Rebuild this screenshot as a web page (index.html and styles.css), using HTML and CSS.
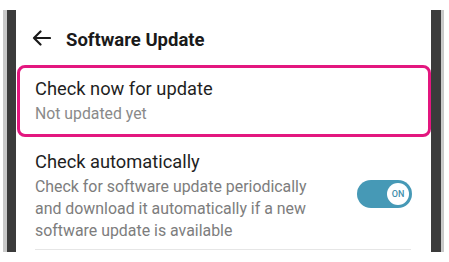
FILE: index.html
```html
<!DOCTYPE html>
<html>
<head>
<meta charset="utf-8">
<link rel="stylesheet" href="styles.css">
</head>
<body>
<div class="device">
  <div class="bezel-left"></div>
  <div class="screen">
    <div class="header">
      <svg class="back" width="19" height="16" viewBox="0 0 19 16"><path d="M18 8H2M8.5 1.5L2 8l6.5 6.5" fill="none" stroke="#1a1a1a" stroke-width="2.2" stroke-linecap="round" stroke-linejoin="round"/></svg>
      <span class="title">Software Update</span>
    </div>
    <div class="item highlighted">
      <div class="item-title">Check now for update</div>
      <div class="item-sub">Not updated yet</div>
    </div>
    <div class="item auto">
      <div class="item-text">
        <div class="item-title">Check automatically</div>
        <div class="item-desc">Check for software update periodically<br>and download it automatically if a new<br>software update is available</div>
      </div>
      <div class="toggle"><span class="knob">ON</span></div>
    </div>
    <div class="divider"></div>
  </div>
  <div class="bezel-right"></div>
</div>
</body>
</html>
```
FILE: styles.css
```css
html, body {
  margin: 0;
  padding: 0;
  background: #ffffff;
  font-family: Roboto, "Noto Sans", sans-serif;
}
.device {
  display: flex;
  margin-top: 10px;
  margin-left: 3px;
  width: 441px;
  height: 242px;
}
.bezel-left {
  width: 9px;
  background: #3b3b3b;
  border-left: 4px solid #c9c9c9;
}
.bezel-right {
  width: 10px;
  background: #3b3b3b;
  border-right: 3px solid #c9c9c9;
}
.screen {
  flex: 1;
  display: flex;
  flex-direction: column;
  background: #fff;
}
.header {
  display: flex;
  align-items: center;
  height: 55px;
  padding-left: 16px;
}
.back {
  margin-right: 15px;
}
.title {
  font-size: 18.5px;
  font-weight: 700;
  color: #1a1a1a;
  padding-top: 5px;
}
.item {
  padding-left: 16px;
}
.highlighted {
  margin-left: 1px;
  height: 66px;
  border: 3px solid #e3177f;
  border-radius: 8px;
  padding-left: 15px;
  display: flex;
  flex-direction: column;
  justify-content: center;
}
.item-title {
  font-size: 18.3px;
  color: #1f1f1f;
  line-height: 22px;
}
.item-sub {
  font-size: 15.8px;
  color: #8a8a8a;
  line-height: 20px;
  margin-top: 4px;
}
.auto {
  display: flex;
  align-items: flex-start;
  padding-left: 19px;
  padding-top: 14px;
  padding-right: 19px;
}
.item-text {
  flex: 1;
}
.item-desc {
  font-size: 15.9px;
  line-height: 22px;
  color: #7d7d7d;
  margin-top: 3px;
}
.toggle {
  width: 55px;
  height: 28px;
  border-radius: 14px;
  background: #4699b6;
  display: flex;
  align-items: center;
  justify-content: flex-end;
  padding-right: 3px;
  box-sizing: border-box;
  margin-top: 29px;
}
.knob {
  width: 22px;
  height: 22px;
  border-radius: 50%;
  background: #fff;
  color: #3f8eab;
  font-size: 9px;
  font-weight: 500;
  display: flex;
  align-items: center;
  justify-content: center;
}
.divider {
  height: 1px;
  background: #e6e6e6;
  margin: 7px 20px 0 19px;
}
```
